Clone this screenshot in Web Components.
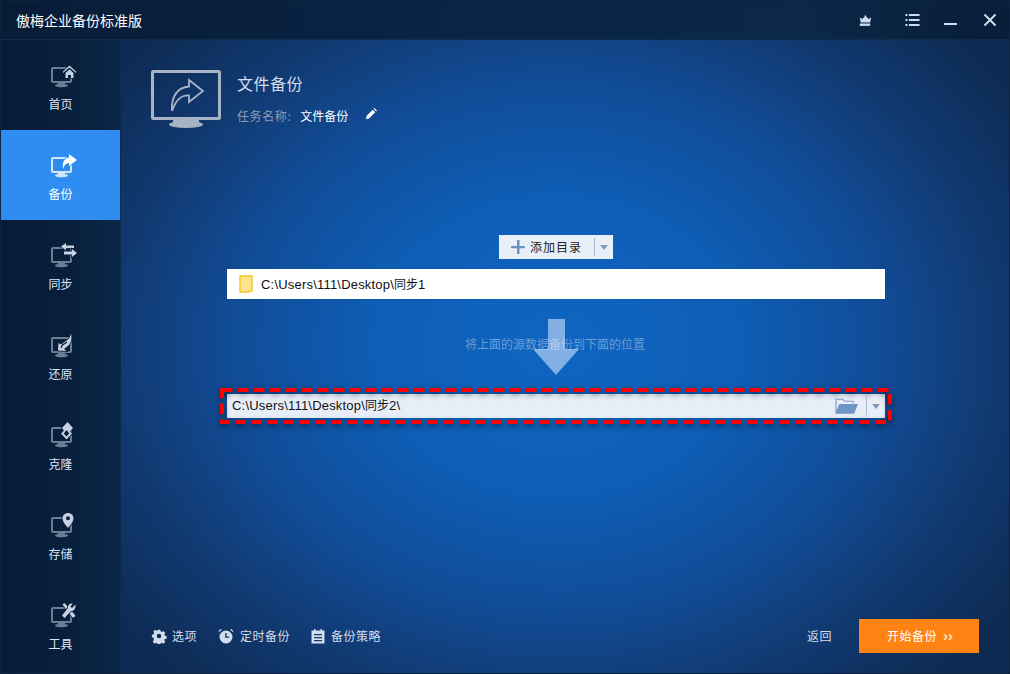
<!DOCTYPE html>
<html lang="zh">
<head>
<meta charset="utf-8">
<title>傲梅企业备份标准版</title>
<style>
    html, body { margin: 0; height: 100%; overflow: hidden; }
    body {
        font-family: "Liberation Sans", "Noto Sans CJK SC", sans-serif;
        background: #0a2446;
    }
</style>
</head>
<body>
<backup-window>
    <title-bar slot="top">傲梅企业备份标准版</title-bar>
    <side-nav slot="side">
        <nav-item icon="home">首页</nav-item>
        <nav-item icon="share" active>备份</nav-item>
        <nav-item icon="sync">同步</nav-item>
        <nav-item icon="restore">还原</nav-item>
        <nav-item icon="clone">克隆</nav-item>
        <nav-item icon="pin">存储</nav-item>
        <nav-item icon="tools">工具</nav-item>
    </side-nav>
    <task-header></task-header>
    <backup-flow></backup-flow>
    <footer-bar slot="bottom"></footer-bar>
</backup-window>

<script>
/* || Window frame */
const WindowTemplate = document.createElement("template");
WindowTemplate.innerHTML = `
    <style>
        :host {
            display: grid;
            grid-template-columns: 119px 1fr;
            grid-template-rows: 39px 1fr;
            box-sizing: border-box;
            width: 1010px;
            height: 674px;
            border: 1px solid #0b2340;
            background: radial-gradient(ellipse 560px 455px at 556px 345px, #0f65c2 0%, #0e5eb6 32%, #114c97 58%, #113a72 78%, #0d2a52 100%);
            background-color: #0c2748;
            color: #fff;
        }
        #top { grid-column: 1 / 3; }
        #side { grid-row: 2; }
        #main {
            grid-row: 2;
            display: flex;
            flex-direction: column;
            min-width: 0;
            border-left: 1px solid #0d2a4c;
        }
        #content { flex-grow: 1; display: flex; flex-direction: column; }
    </style>
    <div id="top"><slot name="top"></slot></div>
    <div id="side"><slot name="side"></slot></div>
    <div id="main">
        <div id="content"><slot></slot></div>
        <slot name="bottom"></slot>
    </div>
`;

class BackupWindow extends HTMLElement {
    constructor() {
        super();
        this.attachShadow({ mode: "open" });
        this.shadowRoot.appendChild(WindowTemplate.content.cloneNode(true));
    }
}
customElements.define("backup-window", BackupWindow);

/* || Title bar */
const TitleTemplate = document.createElement("template");
TitleTemplate.innerHTML = `
    <style>
        :host {
            display: flex;
            align-items: center;
            height: 39px;
            padding-left: 15px;
            box-sizing: border-box;
            background: linear-gradient(90deg, #081c36 0%, #0a2547 50%, #0b2848 80%, #081d38 100%);
            border-bottom: 1px solid #0c2c50;
            font: 14px "Noto Sans CJK SC", sans-serif;
            color: #fff;
        }
        #name { flex-grow: 1; }
        #btns { display: flex; align-items: center; }
        svg { display: block; width: 18px; height: 18px; fill: #cfdcef; }
    </style>
    <span id="name"><slot></slot></span>
    <div id="btns">
        <svg viewBox="0 0 18 18" style="margin-right:29px"><path d="M9 3.400l1.300 2.200 2.400 2.400 2.500-1.600-1 5H4.800l-1-5 2.500 1.600 2.400-2.400z"/><rect x="3.800" y="12.500" width="10.400" height="2.400"/></svg>
        <svg viewBox="0 0 18 18" style="margin-right:21px"><path d="M2.500 3h2v2h-2zM6 3h10.500v2H6zM2.500 8h2v2h-2zM6 8h10.500v2H6zM2.500 13h2v2h-2zM6 13h10.500v2H6z"/></svg>
        <svg viewBox="0 0 18 18" style="margin-right:21px"><rect x="2" y="12" width="13" height="2"/></svg>
        <svg viewBox="0 0 18 18" style="margin-right:10px"><path d="M3.500 3.500L14.500 14.500M14.500 3.500L3.500 14.500" stroke="#cfdcef" stroke-width="2" fill="none"/></svg>
    </div>
`;

class TitleBar extends HTMLElement {
    constructor() {
        super();
        this.attachShadow({ mode: "open" });
        this.shadowRoot.appendChild(TitleTemplate.content.cloneNode(true));
    }
}
customElements.define("title-bar", TitleBar);

/* || Side navigation */
const SideNavTemplate = document.createElement("template");
SideNavTemplate.innerHTML = `
    <style>
        :host {
            display: block;
            height: 100%;
            background: linear-gradient(90deg, #071c37 0%, #08203d 60%, #0a2748 100%);
        }
    </style>
    <slot></slot>
`;

class SideNav extends HTMLElement {
    constructor() {
        super();
        this.attachShadow({ mode: "open" });
        this.shadowRoot.appendChild(SideNavTemplate.content.cloneNode(true));
    }
}
customElements.define("side-nav", SideNav);

const NAV_GLYPHS = {
    home: `<path d="M14 8.500L20.500 2.500L27 8.500V10L20.500 4.500L14 10Z" class="g"/>
           <path d="M16.500 10L20.500 6.500L24.500 10V15H22V12H19V15H16.500Z" class="g"/>`,
    share: `<path d="M20 1L28 7L20 13V10C17 10 15 12 14 16C13 10 15 5 20 4.500Z" class="g"/>`,
    sync: `<path d="M12 3.500L17 0V2.500H25V5H17V7.500Z" class="g"/>
           <path d="M28 10L23 6V8.500H15V11.500H23V14Z" class="g"/>`,
    restore: `<g transform="translate(-3 0)">
              <path d="M12 17.500L12.500 10L15 11.500L22 6.500C23.500 5 24.500 3 25 .5C26 5 25.500 9 23 12L18 16L20.500 18Z" class="g"/>
              <path d="M15 15L16.500 12L21 9" fill="none" stroke="var(--halo)" stroke-width="1.300"/></g>`,
    clone: `<g transform="translate(-3 -1)">
            <path d="M21.500 0L27 6L24 9.500L26 11.500L20.500 17.500L15 11.500L18 8.500L16 6Z" class="g"/>
            <path d="M20.500 8L23.300 11.500L20.500 14.500L17.800 11.500Z" fill="var(--halo)"/></g>`,
    pin: `<path d="M19 0C22 0 24.500 2.300 24.500 5.300C24.500 8.500 21.500 12 19 15C16.500 12 13.500 8.500 13.500 5.300C13.500 2.300 16 0 19 0Z" class="g"/>
          <circle cx="19" cy="5.300" r="2" fill="var(--halo)"/>`,
    tools: `<g transform="translate(-1 0)">
            <path d="M14.500 1.500L16.500 0L27 12C27.500 13.500 26 15 24.500 14.500Z" class="g"/>
            <path d="M27.500 1.500L24 5L22.500 3.500L24.800 .5C22 0 19.500 2 20 5L14 12.500L16.500 15L23 8C26 8.500 28 5 27.500 1.500Z" class="g"/></g>`
};

const NavItemTemplate = document.createElement("template");
NavItemTemplate.innerHTML = `
    <style>
        :host {
            --halo: #08203c;
            --mon: #6d7d93;
            --glyph: #c6d2e2;
            display: flex;
            flex-direction: column;
            align-items: center;
            box-sizing: border-box;
            height: 90px;
            padding-top: 23px;
            font: 12px "Noto Sans CJK SC", sans-serif;
            color: #dbe5f2;
        }
        :host([active]) {
            --halo: #2f8cf0;
            --mon: #d2e6fb;
            --glyph: #fff;
            background: #2f8cf0;
            color: #fff;
        }
        svg { display: block; width: 30px; height: 26px; margin: 0 0 6px 6px; overflow: visible; }
        .mon { fill: none; stroke: var(--mon); stroke-width: 2; }
        .base { fill: var(--mon); }
        .g { fill: var(--glyph); stroke: var(--halo); stroke-width: 1.600; paint-order: stroke; }
        span { line-height: 18px; }
    </style>
    <svg viewBox="0 0 30 26"></svg>
    <span><slot></slot></span>
`;

class NavItem extends HTMLElement {
    constructor() {
        super();
        this.attachShadow({ mode: "open" });
        this.shadowRoot.appendChild(NavItemTemplate.content.cloneNode(true));
    }
    connectedCallback() {
        const glyph = NAV_GLYPHS[this.getAttribute("icon")] || "";
        this.shadowRoot.querySelector("svg").innerHTML = `
            <rect class="mon" x="3" y="5" width="19" height="14" rx="1"/>
            <path class="base" d="M9 19h7v2h-7z"/>
            <ellipse class="base" cx="12.500" cy="22.500" rx="6.500" ry="1.700"/>
            ${glyph}`;
    }
}
customElements.define("nav-item", NavItem);

/* || Task header */
const HeaderTemplate = document.createElement("template");
HeaderTemplate.innerHTML = `
    <style>
        :host {
            display: flex;
            align-items: flex-start;
            gap: 15px;
            padding: 30px 0 0 30px;
            height: 150px;
            box-sizing: border-box;
            font-family: "Noto Sans CJK SC", sans-serif;
        }
        #pic { display: block; width: 71px; height: 59px; flex-shrink: 0; }
        #big { font-size: 16px; letter-spacing: .5px; line-height: 22px; margin-top: 2px; color: #d5deeb; }
        #line { display: flex; align-items: center; font-size: 12px; line-height: 18px; margin-top: 13px; }
        #lab { color: #8c9db5; letter-spacing: .6px; margin-right: 9px; }
        #val { color: #fff; }
        #pen { display: block; width: 12px; height: 12px; margin-left: 17px; margin-top: -4px; fill: #fff; }
    </style>
    <svg id="pic" viewBox="0 0 71 59">
        <rect x="1.500" y="1.500" width="67" height="47" rx="1" fill="none" stroke="#a8b4c6" stroke-width="3"/>
        <path d="M22 50h26v2H22z" fill="#a8b4c6"/>
        <ellipse cx="35" cy="54.500" rx="17" ry="3.500" fill="#a8b4c6"/>
        <path d="M38 10L52 21L38 32V25.500C30 25 25 29.500 21 41C20 27 26 17.500 38 16.500Z" fill="none" stroke="#a8b4c6" stroke-width="1.800"/>
    </svg>
    <div>
        <div id="big">文件备份</div>
        <div id="line">
            <span id="lab">任务名称:</span>
            <span id="val">文件备份</span>
            <svg id="pen" viewBox="0 0 14 14"><path d="M1 13l1-4 7-7 3 3-7 7zM10 1l1-1 3 3-1 1z"/></svg>
        </div>
    </div>
`;

class TaskHeader extends HTMLElement {
    constructor() {
        super();
        this.attachShadow({ mode: "open" });
        this.shadowRoot.appendChild(HeaderTemplate.content.cloneNode(true));
    }
}
customElements.define("task-header", TaskHeader);

/* || Source, arrow and destination */
const FlowTemplate = document.createElement("template");
FlowTemplate.innerHTML = `
    <style>
        :host {
            display: flex;
            flex-direction: column;
            align-items: center;
            width: 658px;
            margin: 45px 0 0 106px;
            font: 13px "Liberation Sans", "Noto Sans CJK SC", sans-serif;
            letter-spacing: .2px;
            color: #111;
        }
        .cjk { font: 12px "Noto Sans CJK SC", sans-serif; letter-spacing: 0; }
        #add {
            display: flex;
            align-items: center;
            width: 114px;
            height: 24px;
            box-sizing: border-box;
            padding-left: 12px;
            background: #e8eff9;
            margin-bottom: 10px;
            font: 12px "Noto Sans CJK SC", sans-serif;
            letter-spacing: 1px;
            color: #222;
        }
        #add .plus { display: block; width: 14px; height: 14px; margin-right: 5px; fill: #6d93bd; }
        #add span { padding-bottom: 2px; }
        #add .sep { width: 1px; height: 18px; background: #a9b6c8; margin-left: 12px; }
        .caret { width: 0; height: 0; border: 4px solid transparent; border-top: 5px solid #7e9ab9; border-bottom: 0; }
        #add .caret { margin-left: 5px; }
        #src {
            display: flex;
            align-items: center;
            align-self: stretch;
            height: 30px;
            padding-left: 12px;
            background: #fff;
        }
        #src svg { display: block; width: 14px; height: 18px; margin-right: 8px; }
        #src > span { padding-bottom: 2px; }
        #gap {
            display: grid;
            align-self: stretch;
            height: 95px;
            justify-items: center;
        }
        #gap > * { grid-area: 1 / 1; }
        #gap svg { display: block; width: 46px; height: 56px; margin-top: 20px; }
        #gap span {
            margin-top: 36px;
            font: 12px/18px "Noto Sans CJK SC", sans-serif;
            letter-spacing: 0;
            color: rgba(255,255,255,.38);
            margin-left: -2px;
        }
        #dst {
            position: relative;
            display: flex;
            align-items: center;
            align-self: stretch;
            height: 24px;
            padding-left: 5px;
            background: #e7eef8;
        }
        #dst .path { flex-grow: 1; padding-bottom: 3px; }
        #dst .folder { display: block; width: 23px; height: 16px; }
        #dst .sep { width: 1px; height: 18px; background: #a9b6c8; margin: 0 5px 0 8px; }
        #dst .caret { margin-right: 5px; }
        #mark {
            position: absolute;
            left: -7px;
            top: -6px;
            width: 672px;
            height: 36px;
            overflow: visible;
            filter: drop-shadow(0 2px 3px rgba(0,0,0,.6));
        }
    </style>
    <div id="add">
        <svg class="plus" viewBox="0 0 14 14"><path d="M6 0h2.500v6H14v2.300H8.500V14H6V8.300H0V6h6z"/></svg>
        <span>添加目录</span>
        <div class="sep"></div>
        <div class="caret"></div>
    </div>
    <div id="src">
        <svg viewBox="0 0 14 18">
            <path d="M1 1h12v15h-3v1H1z" fill="#ffe48a" stroke="#efc92b" stroke-width="1.400"/>
        </svg>
        <span>C:\\Users\\111\\Desktop\\<span class="cjk">同步</span>1</span>
    </div>
    <div id="gap">
        <svg viewBox="0 0 46 56"><path d="M15 0h17v30h14L23 56 0 30h15z" fill="#83b0e4"/></svg>
        <span>将上面的源数据备份到下面的位置</span>
    </div>
    <div id="dst">
        <span class="path">C:\\Users\\111\\Desktop\\<span class="cjk">同步</span>2\\</span>
        <svg class="folder" viewBox="0 0 24 16">
            <path d="M1 14V1h7l2 2h9v2" fill="none" stroke="#7da0c8" stroke-width="1.200"/>
            <path d="M4.500 6H24l-4 10H0z" fill="#6e96c4"/>
        </svg>
        <div class="sep"></div>
        <div class="caret"></div>
        <svg id="mark" viewBox="0 0 672 36">
            <rect x="2" y="2" width="668" height="32" fill="none" stroke="#ff0000" stroke-width="4" stroke-dasharray="10.500 5.500"/>
        </svg>
    </div>
`;

class BackupFlow extends HTMLElement {
    constructor() {
        super();
        this.attachShadow({ mode: "open" });
        this.shadowRoot.appendChild(FlowTemplate.content.cloneNode(true));
    }
}
customElements.define("backup-flow", BackupFlow);

/* || Bottom bar */
const FooterTemplate = document.createElement("template");
FooterTemplate.innerHTML = `
    <style>
        :host {
            display: flex;
            align-items: center;
            height: 34px;
            margin-bottom: 20px;
            padding: 0 30px;
            font: 12px "Noto Sans CJK SC", sans-serif;
            letter-spacing: .5px;
            color: #d3deec;
        }
        .opt { display: flex; align-items: center; margin-right: 21px; }
        .opt svg { display: block; width: 16px; height: 16px; margin-right: 5px; fill: #d3deec; }
        .opt span, #back, #go span { padding-bottom: 2px; }
        #clock { margin-right: 20px; }
        #clock svg { margin-right: 6px; }
        #space { flex-grow: 1; }
        #back { margin-right: 27px; }
        #go {
            width: 120px;
            height: 34px;
            display: flex;
            align-items: center;
            justify-content: center;
            background: #ff8313;
            color: #fff;
            padding-left: 2px;
            box-sizing: border-box;
        }
        #go small { font: bold 15px "Liberation Sans", sans-serif; margin: -2px 0 0 6px; color: #ffe3c4; letter-spacing: 0; }
    </style>
    <div class="opt">
        <svg viewBox="0 0 16 16"><path fill-rule="evenodd" d="M6.500 1h3l.4 2 1.300.6 1.700-1.100 2.100 2.100-1.100 1.700.6 1.300 2 .4v3l-2 .4-.6 1.300 1.100 1.700-2.100 2.100-1.700-1.100-1.300.6-.4 2h-3l-.4-2-1.300-.6-1.700 1.100-2.100-2.100 1.100-1.700L2.100 9.900l-2-.4v-3l2-.4.6-1.300-1.100-1.700 2.100-2.100 1.700 1.100 1.300-.6zM8 5.500a2.500 2.500 0 1 0 0 5 2.500 2.500 0 0 0 0-5z" transform="translate(.8 .8) scale(.9)"/></svg>
        <span>选项</span>
    </div>
    <div class="opt" id="clock">
        <svg viewBox="0 0 16 16"><path fill-rule="evenodd" d="M8 2.500a6.500 6.500 0 1 1 0 13 6.500 6.500 0 0 1 0-13zM7.200 5v4.800h4V8.500H8.600V5zM.8 4.500L4 1.500C2.500.5.500 2 .8 4.500zM15.200 4.500L12 1.500c1.500-1 3.500.5 3.200 3z"/></svg>
        <span>定时备份</span>
    </div>
    <div class="opt">
        <svg viewBox="0 0 16 16"><path fill-rule="evenodd" d="M1.500 2.500H4V1h1.500v1.500h5V1H12v1.500h2.500V15.500h-13zM4 6v1.300h8V6zM4 9v1.300h8V9zM4 12v1.300h8V12z"/></svg>
        <span>备份策略</span>
    </div>
    <div id="space"></div>
    <span id="back">返回</span>
    <div id="go"><span>开始备份</span><small>››</small></div>
`;

class FooterBar extends HTMLElement {
    constructor() {
        super();
        this.attachShadow({ mode: "open" });
        this.shadowRoot.appendChild(FooterTemplate.content.cloneNode(true));
    }
}
customElements.define("footer-bar", FooterBar);
</script>
</body>
</html>
